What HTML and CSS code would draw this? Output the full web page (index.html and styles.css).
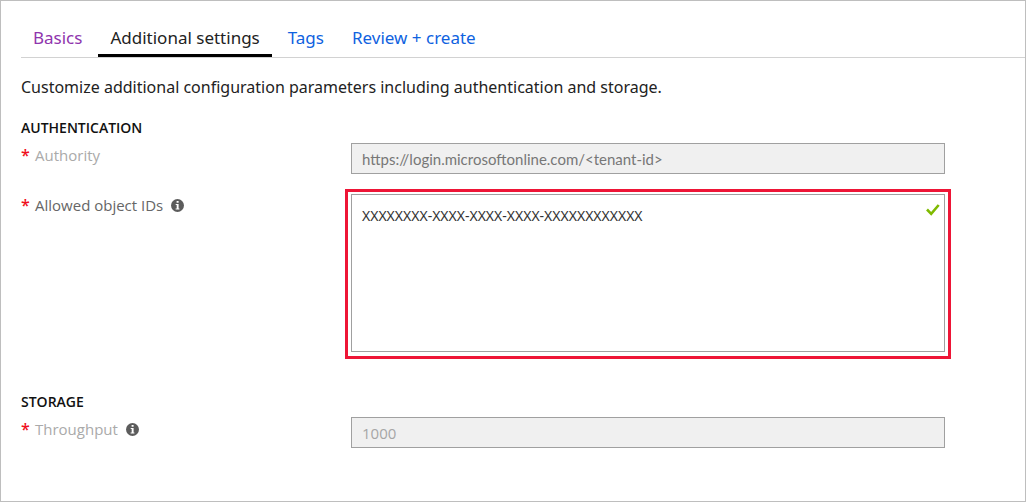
FILE: index.html
```html
<!DOCTYPE html>
<html lang="en">
<head>
<meta charset="utf-8">
<title>Additional settings</title>
<link rel="stylesheet" href="styles.css">
</head>
<body>
<main class="panel">
  <nav class="tabs">
    <a class="tab visited" href="#basics">Basics</a>
    <a class="tab active" href="#additional" aria-current="page">Additional settings</a>
    <a class="tab" href="#tags">Tags</a>
    <a class="tab" href="#review">Review + create</a>
  </nav>
  <form class="form">
    <p class="intro">Customize additional configuration parameters including authentication and storage.</p>

    <section class="section">
      <h2 class="heading">AUTHENTICATION</h2>
      <div class="row">
        <div class="label muted"><span class="star">*</span><label for="authority">Authority</label></div>
        <input class="box authority" id="authority" type="text" value="https://login.microsoftonline.com/&lt;tenant-id&gt;" disabled>
      </div>
      <div class="row tall">
        <div class="label"><span class="star">*</span><label for="ids">Allowed object IDs</label>
          <button class="info" type="button" aria-label="About allowed object IDs"><svg viewBox="0 0 13 13"><circle cx="6.500" cy="6.500" r="6.500" fill="#5c5c5c"/><path d="M5.600 2h2v1.700h-2zM4.700 5h2.900v4.500h.8v1.100H4.600V9.500h1.100V6.100h-1z" fill="#fff"/></svg></button>
        </div>
        <div class="highlight">
          <textarea class="box ids" id="ids" spellcheck="false">XXXXXXXX-XXXX-XXXX-XXXX-XXXXXXXXXXXX</textarea>
          <svg class="check" viewBox="0 0 14 12"><path d="M1 5.500 5.200 9.800 12.700 1" fill="none" stroke="#7fba00" stroke-width="2.600"/></svg>
        </div>
      </div>
    </section>

    <section class="section storage">
      <h2 class="heading">STORAGE</h2>
      <div class="row">
        <div class="label muted"><span class="star">*</span><label for="throughput">Throughput</label>
          <button class="info" type="button" aria-label="About throughput"><svg viewBox="0 0 13 13"><circle cx="6.500" cy="6.500" r="6.500" fill="#5c5c5c"/><path d="M5.600 2h2v1.700h-2zM4.700 5h2.900v4.500h.8v1.100H4.600V9.500h1.100V6.100h-1z" fill="#fff"/></svg></button>
        </div>
        <input class="box throughput" id="throughput" type="text" value="1000" disabled>
      </div>
    </section>
  </form>
</main>
</body>
</html>
```
FILE: styles.css
```css
* { box-sizing: border-box; }
body {
  margin: 0;
  font-family: "Noto Sans", "Open Sans", sans-serif;
  font-size: 15px;
  color: #222;
  background: #fff;
}
.panel {
  min-height: 100vh;
  border: 1px solid #bebebe;
  padding: 16px 0 0 20px;
}
.tabs {
  display: flex;
  gap: 4px;
  border-bottom: 1px solid #d2d2d2;
}
.tab {
  padding: 9px 12px 5px;
  border-bottom: 3px solid transparent;
  font-size: 17px;
  line-height: 23px;
  color: #0f62e0;
  text-decoration: none;
}
.tab.visited { color: #8f35ad; }
.tab.active { color: #222; border-bottom-color: #000; }
.form { padding-right: 80px; }
.intro {
  margin: 17px 0 0;
  font-size: 16px;
  line-height: 24px;
}
.section { margin-top: 20px; }
.storage { margin-top: 34px; }
.heading {
  margin: 0;
  font-family: "Open Sans", sans-serif;
  font-size: 14px;
  line-height: 18px;
  font-weight: 600;
  color: #111;
}
.row {
  display: grid;
  grid-template-columns: 330px 1fr;
  align-items: start;
  margin-top: 6px;
}
.row.tall { margin-top: 15px; }
.tall .label { padding-top: 4px; }
.label {
  display: flex;
  align-items: center;
  font-family: "Open Sans", sans-serif;
  line-height: 24px;
  color: #666;
}
.muted { color: #aaa; }
.star {
  width: 14px;
  font-size: 16px;
  font-weight: 600;
  color: #f01020;
}
.info {
  width: 13px;
  height: 13px;
  margin-left: 8px;
  padding: 0;
  border: 0;
  background: none;
}
.info svg { display: block; }
.box {
  display: block;
  width: 100%;
  height: 31px;
  margin: 0;
  padding: 0 10px;
  border: 1px solid #a0a0a0;
  border-radius: 0;
  font-family: "Open Sans", sans-serif;
  font-size: 15px;
  color: #a6a6a6;
  background: #f0f0f0;
}
.authority {
  font-family: Lato, sans-serif;
  color: #777;
}
.highlight {
  position: relative;
  margin: 0 -6px;
  padding: 2px 3px 4px;
  border: 3px solid #ee1536;
}
.ids {
  height: 158px;
  padding: 11px 10px;
  font-family: "Noto Sans", sans-serif;
  font-size: 14px;
  line-height: 20px;
  color: #333;
  background: #fff;
  resize: none;
  outline: none;
}
.check {
  position: absolute;
  top: 12px;
  right: 8px;
  width: 14px;
  height: 12px;
}
```
